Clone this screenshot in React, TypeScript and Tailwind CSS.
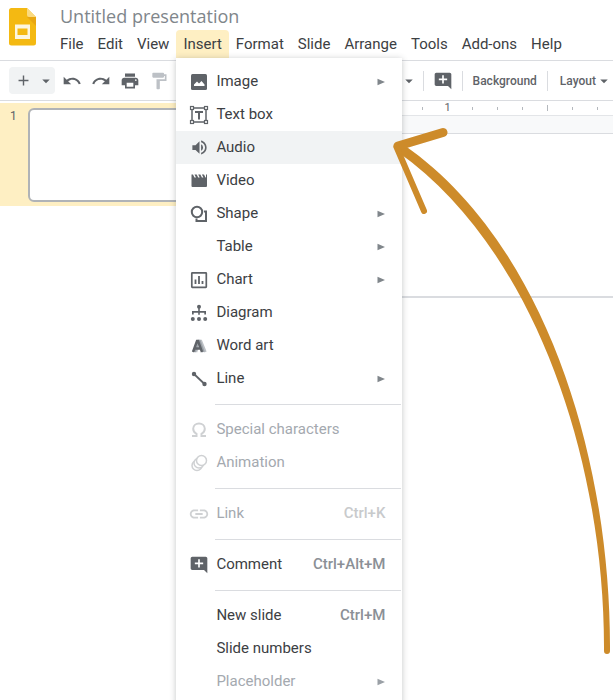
import React from 'react';
import {
  MdAdd,
  MdAddComment,
  MdArrowDropDown,
  MdFormatPaint,
  MdLink,
  MdPrint,
  MdRedo,
  MdUndo,
  MdVolumeUp
} from 'react-icons/md';

interface MenuEntry {
  label: string;
  icon?: React.ReactNode;
  shortcut?: string;
  submenu?: boolean;
  disabled?: boolean;
  active?: boolean;
}

const ImageIcon = () => (
  <svg width="18" height="18" viewBox="0 0 18 18">
    <rect x="1" y="1" width="16" height="16" rx="1.5" fill="currentColor" />
    <path d="M4 13v-1.500l3-3 2 2 2.500-2.500 3 3.500V13z" fill="#fff" />
  </svg>
);

const TextBoxIcon = () => (
  <svg width="20" height="20" viewBox="0 0 20 20" fill="none" stroke="currentColor">
    <rect x="3" y="3" width="14" height="14" strokeWidth="1.500" />
    <g fill="#fff" strokeWidth="1.200">
      <rect x="1.500" y="1.500" width="3" height="3" />
      <rect x="15.500" y="1.500" width="3" height="3" />
      <rect x="1.500" y="15.500" width="3" height="3" />
      <rect x="15.500" y="15.500" width="3" height="3" />
    </g>
    <path d="M6 7h8M10 7v7.500" strokeWidth="2" />
  </svg>
);

const VideoIcon = () => (
  <svg width="18" height="18" viewBox="0 0 18 18" fill="currentColor">
    <path d="M1.500 2.500h1.500l1.500 3H6l-1.500-3h2.200l1.500 3h1.500l-1.500-3h2.200l1.500 3h1.500l-1.500-3H14l1.500 3h.5V2.500h1V14a1 1 0 0 1-1 1H2.500a1 1 0 0 1-1-1z" />
  </svg>
);

const ShapeIcon = () => (
  <svg width="18" height="18" viewBox="0 0 18 18" fill="none" stroke="currentColor" strokeWidth="2">
    <circle cx="7" cy="7" r="5.200" />
    <path d="M14 6.500h2V16H6.500v-2.500" />
  </svg>
);

const ChartIcon = () => (
  <svg width="18" height="18" viewBox="0 0 18 18" fill="none" stroke="currentColor">
    <rect x="1.800" y="1.800" width="14.500" height="14.500" rx="0.500" strokeWidth="1.700" />
    <path d="M5.500 8.500V13M9 5v8M12.500 10v3" strokeWidth="1.800" />
  </svg>
);

const DiagramIcon = () => (
  <svg width="18" height="18" viewBox="0 0 18 18" fill="currentColor">
    <circle cx="9" cy="2.800" r="2" />
    <path d="M8.200 4h1.600v3H16v3.500h-1.700V8.700H9.800v2H8.200v-2H3.700v1.800H2V7h6.200z" />
    <circle cx="2.800" cy="15" r="2" />
    <circle cx="9" cy="15" r="2" />
    <circle cx="15.200" cy="15" r="2" />
  </svg>
);

const WordArtIcon = () => (
  <svg width="18" height="18" viewBox="0 0 18 18" fill="none" strokeWidth="2.400">
    <path d="M6 15l4-11h1l4.500 11" stroke="#bdc1c6" />
    <path d="M4.500 15l4-11h1l4 11" stroke="#9aa0a6" />
    <path d="M3 15l4-11h1l4 11M5 11.500h5" stroke="currentColor" />
  </svg>
);

const LineIcon = () => (
  <svg width="18" height="18" viewBox="0 0 18 18" fill="currentColor">
    <circle cx="4" cy="4" r="2.200" />
    <circle cx="14.500" cy="14" r="2.200" />
    <path d="M4 4l10.500 10" stroke="currentColor" strokeWidth="1.800" />
  </svg>
);

const OmegaIcon = () => (
  <svg width="18" height="18" viewBox="0 0 18 18" fill="none" stroke="currentColor" strokeWidth="2">
    <path d="M2 15h4.500v-2.200C4.500 11.800 3.200 10 3.200 7.800 3.200 4.600 5.800 2.500 9 2.500s5.800 2.100 5.800 5.300c0 2.200-1.300 4-3.300 5V15H16" />
  </svg>
);

const AnimationIcon = () => (
  <svg width="18" height="18" viewBox="0 0 18 18" fill="#fff" stroke="currentColor" strokeWidth="1.500">
    <circle cx="7" cy="11.500" r="5" />
    <circle cx="9" cy="9" r="5" />
    <circle cx="11.500" cy="6.500" r="5" />
  </svg>
);

const menuBar = ['File', 'Edit', 'View', 'Insert', 'Format', 'Slide', 'Arrange', 'Tools', 'Add-ons', 'Help'];

const insertMenu: MenuEntry[][] = [
  [
    { label: 'Image', icon: <ImageIcon />, submenu: true },
    { label: 'Text box', icon: <TextBoxIcon /> },
    { label: 'Audio', icon: <MdVolumeUp size={19} />, active: true },
    { label: 'Video', icon: <VideoIcon /> },
    { label: 'Shape', icon: <ShapeIcon />, submenu: true },
    { label: 'Table', submenu: true },
    { label: 'Chart', icon: <ChartIcon />, submenu: true },
    { label: 'Diagram', icon: <DiagramIcon /> },
    { label: 'Word art', icon: <WordArtIcon /> },
    { label: 'Line', icon: <LineIcon />, submenu: true }
  ],
  [
    { label: 'Special characters', icon: <OmegaIcon />, disabled: true },
    { label: 'Animation', icon: <AnimationIcon />, disabled: true }
  ],
  [{ label: 'Link', icon: <MdLink size={22} />, shortcut: 'Ctrl+K', disabled: true }],
  [{ label: 'Comment', icon: <MdAddComment size={20} />, shortcut: 'Ctrl+Alt+M' }],
  [
    { label: 'New slide', shortcut: 'Ctrl+M' },
    { label: 'Slide numbers' },
    { label: 'Placeholder', submenu: true, disabled: true }
  ]
];

const MenuRow: React.FC<{ item: MenuEntry }> = ({ item }) => (
  <button
    role="menuitem"
    disabled={item.disabled}
    className={`flex h-[33px] w-full items-center pr-[17px] pl-3 text-left ${item.active ? 'bg-[#f1f3f4]' : ''} ${
      item.disabled ? 'text-[#a4a9af]' : 'text-[#3c4043]'
    }`}
  >
    <span className={`flex w-[22px] justify-center ${item.disabled ? 'text-[#cfd1d3]' : 'text-[#5f6368]'}`}>
      {item.icon}
    </span>
    <span className="ml-[6px] flex-1 whitespace-nowrap">{item.label}</span>
    {item.shortcut && (
      <span className={`font-medium ${item.disabled ? 'text-[#c8cacc]' : 'text-[#8b9096]'}`}>{item.shortcut}</span>
    )}
    {item.submenu && (
      <svg width="8" height="8" viewBox="0 0 8 8" className={item.disabled ? 'text-[#9aa0a6]' : 'text-[#80868b]'}>
        <path d="M0.500 0.800L8 4L0.500 7.200z" fill="currentColor" />
      </svg>
    )}
  </button>
);

const InsertMenu = () => (
  <div
    role="menu"
    className="absolute top-full left-0 z-10 w-[226px] rounded-b-sm bg-white pt-[7px] pb-2 text-[15px] shadow-[0_1px_6px_rgba(60,64,67,0.3)]"
  >
    {insertMenu.map((group, i) => (
      <React.Fragment key={group[0].label}>
        {i > 0 && <div role="separator" className="mt-[9px] mr-px mb-2 ml-[39px] h-px bg-[#dadce0]" />}
        {group.map((item) => (
          <MenuRow key={item.label} item={item} />
        ))}
      </React.Fragment>
    ))}
  </div>
);

const SlidesLogo = () => (
  <svg width="28" height="38" viewBox="0 0 28 38">
    <path d="M2.500 0H18l9 9v26a2.500 2.500 0 0 1-2.500 2.500h-22A2.500 2.500 0 0 1 0 35V2.500A2.500 2.500 0 0 1 2.500 0z" fill="#f4b912" />
    <path d="M18 9h9v9z" fill="#e9a711" />
    <path d="M18 0l9 9h-7a2 2 0 0 1-2-2z" fill="#fada80" />
    <path d="M6 16.500h15V31H6zM8.500 20.500v6.500h10v-6.500z" fill="#fdf6e0" fillRule="evenodd" />
  </svg>
);

const Header = () => (
  <header className="flex h-[61px] shrink-0 border-b border-[#dadce0] pl-[9px]">
    <a href="#home" aria-label="Slides home" className="mt-2">
      <SlidesLogo />
    </a>
    <div className="ml-4 pt-[3px]">
      <h1 className="mb-px pl-[7px] font-['Open_Sans','Noto_Sans',sans-serif] text-[18px] leading-[26px] text-[#80868b]">
        Untitled presentation
      </h1>
      <nav className="flex text-[15px] text-[#3c4043]">
        {menuBar.map((label) => (
          <div key={label} className="relative">
            <button
              className={`h-7 px-[7px] ${label === 'Insert' ? 'rounded-t-sm bg-[#feefc3]' : ''}`}
              aria-haspopup="menu"
            >
              {label}
            </button>
            {label === 'Insert' && <InsertMenu />}
          </div>
        ))}
      </nav>
    </div>
  </header>
);

const Divider = () => <div className="h-5 w-px bg-[#dadce0]" />;

const Toolbar = () => (
  <div className="flex h-10 shrink-0 items-center border-b border-[#dadce0] pl-[9px] text-[#5f6368]">
    <div className="flex h-[27px] w-[46px] items-center justify-between rounded-sm bg-[#f1f3f4] pl-[6px]">
      <button aria-label="New slide">
        <MdAdd size={17} />
      </button>
      <button aria-label="New slide with layout">
        <MdArrowDropDown size={18} />
      </button>
    </div>
    <div className="ml-[7px] flex w-[342px] items-center gap-[9px]">
      <button aria-label="Undo">
        <MdUndo size={20} />
      </button>
      <button aria-label="Redo">
        <MdRedo size={20} />
      </button>
      <button aria-label="Print">
        <MdPrint size={20} />
      </button>
      <button aria-label="Paint format" className="text-[#bdc1c6]" disabled>
        <MdFormatPaint size={20} />
      </button>
    </div>
    <button aria-label="Line options">
      <MdArrowDropDown size={18} />
    </button>
    <div className="ml-[5px] flex items-center">
      <Divider />
      <button aria-label="Add comment" className="px-[9px]">
        <MdAddComment size={20} />
      </button>
      <Divider />
      <button className="px-[10px] text-[12px] font-medium">Background</button>
      <Divider />
      <button className="flex items-center pl-3 text-[12px] font-medium">
        Layout
        <MdArrowDropDown size={18} className="-ml-px" />
      </button>
    </div>
  </div>
);

const Ruler = () => (
  <div className="flex h-[15px] items-center overflow-hidden border-b border-[#e3e5e8] pl-[5px]">
    {Array.from({ length: 17 }, (_, i) => (
      <div key={i} className="flex w-[25px] shrink-0 justify-center">
        {i > 1 && i % 8 === 1 ? (
          <span className="text-[11px] leading-3 text-[#5f6368]">{(i - 1) / 8}</span>
        ) : (
          <span className={`w-px bg-[#b4b8bd] ${i % 8 === 5 ? 'h-[6px]' : 'h-[3px]'}`} />
        )}
      </div>
    ))}
  </div>
);

const Workspace = () => (
  <main className="flex flex-1">
    <aside className="w-[205px] shrink-0 pt-[2px]">
      <div className="flex h-[103px] bg-[#feefc3] pt-[5px]">
        <span className="w-[28px] pl-[10px] text-[12px] leading-4 text-[#5f6368]">1</span>
        <button
          aria-label="Slide 1"
          className="h-[94px] w-[167px] rounded-md border-2 border-[#b0b3b7] bg-white"
        />
      </div>
    </aside>
    <section className="min-w-0 flex-1">
      <Ruler />
      <div className="h-[18px] border-b border-[#dadce0] bg-[#f8f9fa]" />
      <div className="h-[164px] border-b-2 border-[#dadce0] bg-white" />
    </section>
  </main>
);

const PointerArrow = () => (
  <svg width="220" height="530" viewBox="393 126 220 530" className="pointer-events-none absolute top-[126px] left-[393px] z-20">
    <g fill="#cd8b2a" stroke="#cd8b2a" strokeLinecap="round">
      <path
        stroke="none"
        d="M404 145C545 243 611 458 610 651A3 3 0 0 1 604 651C605 462 535 249 398 152z"
      />
      <path d="M398 146L443 132.500" strokeWidth="9" />
      <path d="M396.500 147L424 211" strokeWidth="6" />
    </g>
  </svg>
);

const App: React.FC = () => {
  return (
    <div className="relative flex h-screen flex-col overflow-hidden bg-white font-[Roboto,'Liberation_Sans',sans-serif]">
      <Header />
      <Toolbar />
      <Workspace />
      <PointerArrow />
    </div>
  );
};

export default App;
